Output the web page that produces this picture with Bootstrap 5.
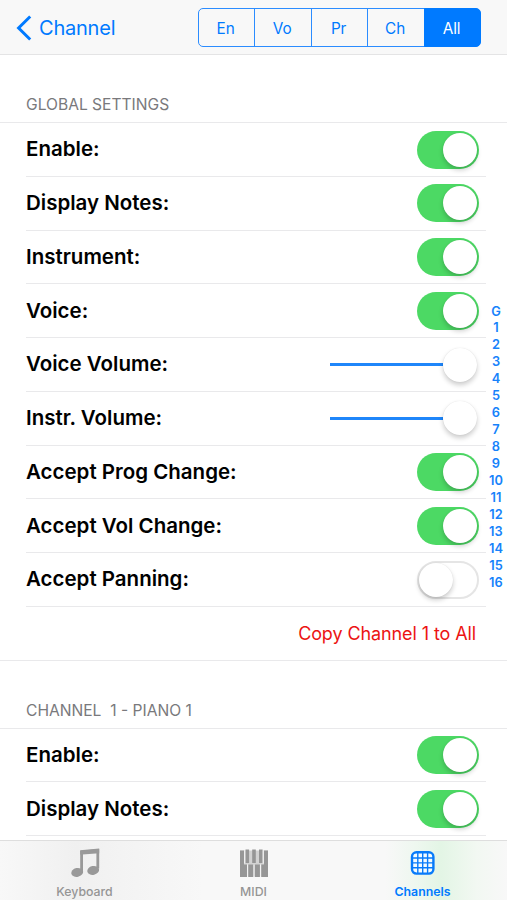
<!DOCTYPE html>
<html lang="en">
<head>
<meta charset="utf-8">
<meta name="viewport" content="width=device-width, initial-scale=1">
<title>Channels</title>
<link href="https://cdn.jsdelivr.net/npm/bootstrap@5.3.0/dist/css/bootstrap.min.css" rel="stylesheet">
<style>
:root{--blue:#007aff;--line:#e9e9eb}
body{font-family:Inter,"Liberation Sans",sans-serif;color:#000;line-height:1.2}
.screen{height:900px}
.topbar{height:55px;background:#f8f8f8;border-bottom:1px solid #e4e4e5;padding:1px 25.6px 0 16px}
.back{color:var(--blue);font-size:20px;letter-spacing:-.22px;gap:6px;text-decoration:none}
.segments{width:283.6px;height:39px}
.segments .btn{--bs-btn-color:var(--blue);--bs-btn-border-color:#2b8cff;--bs-btn-active-color:#fff;--bs-btn-active-bg:var(--blue);--bs-btn-active-border-color:var(--blue);--bs-btn-font-size:15.3px;--bs-btn-border-radius:5px;flex:1 1 0;padding:1px 2px 0 0;line-height:37px;letter-spacing:-.1px;--bs-btn-border-width:1.3px}
.settings{height:785px;background:#fff}
.section-title{color:#79797c;font-size:15.6px;padding:0 26px 7px;border-bottom:1px solid var(--line);white-space:pre}
.first-title{height:68px}
.next-title{height:69px;border-top:1px solid var(--line)}
.setting{height:53.75px;margin-left:26px;margin-right:21px;padding:.5px 7px 0 0;border-bottom:1px solid var(--line);font-size:20.5px;font-weight:600}
.final{border-bottom:0;height:52.75px;padding-right:10px}
.copy{color:#ec1313;font-weight:400;font-size:18px;letter-spacing:-.1px}
.toggle{width:62.5px;height:38px;border-radius:19px;background:#4cd964;padding:2px}
.knob{width:34px;height:34px;border-radius:50%;background:#fff;box-shadow:0 3px 5px rgba(0,0,0,.2),0 0 1px rgba(0,0,0,.12)}
.toggle.off{background:#fff;border:2px solid #e5e5e5;padding:0}
.slide{width:149px;padding-right:2px}
.track{height:3px;background:#1f86fa}
.rail{right:0;top:303.5px;width:22px;color:#1682fb;font-size:12.8px;font-weight:600;line-height:16.96px;letter-spacing:.1px}
.tabs{height:60px;background:linear-gradient(90deg,#f8f8f8 0,#f0f0f0 15%,#f4f4f4 27%,#f8f8f8 40%,#f8f8f8 76%,#eef7ef 82%,#e3f5e5 87%,#f2f8f2 94%,#f8f8f8 100%);border-top:1px solid #dedede;color:#959595;font-size:12.3px;font-weight:500}
.tab{padding-top:6px}
.tab.current{color:var(--blue);font-weight:600}
.tab svg{margin-bottom:6px}
</style>
<script src="https://cdn.jsdelivr.net/npm/bootstrap@5.3.0/dist/js/bootstrap.bundle.min.js"></script>
</head>
<body>
<div class="screen position-relative overflow-hidden d-flex flex-column">
<header class="topbar d-flex align-items-center justify-content-between flex-shrink-0">
<a class="back d-flex align-items-center"><svg width="17" height="28" viewBox="0 0 17 28"><path d="M14.2 2.5 2.6 14l11.6 11.5" fill="none" stroke="#007aff" stroke-width="3"/></svg><span class="label-back">Channel</span></a>
<div class="btn-group segments">
<button class="btn">En</button><button class="btn">Vo</button><button class="btn">Pr</button><button class="btn">Ch</button><button class="btn active">All</button>
</div>
</header>
<main class="settings overflow-hidden flex-shrink-0">
<div class="section-title first-title d-flex align-items-end">GLOBAL SETTINGS</div>
<div class="setting d-flex align-items-center justify-content-between"><span>Enable:</span><div class="toggle d-flex justify-content-end"><div class="knob"></div></div></div>
<div class="setting d-flex align-items-center justify-content-between"><span>Display Notes:</span><div class="toggle d-flex justify-content-end"><div class="knob"></div></div></div>
<div class="setting d-flex align-items-center justify-content-between"><span>Instrument:</span><div class="toggle d-flex justify-content-end"><div class="knob"></div></div></div>
<div class="setting d-flex align-items-center justify-content-between"><span>Voice:</span><div class="toggle d-flex justify-content-end"><div class="knob"></div></div></div>
<div class="setting d-flex align-items-center justify-content-between"><span>Voice Volume:</span><div class="slide d-flex align-items-center"><div class="track flex-grow-1"></div><div class="knob"></div></div></div>
<div class="setting d-flex align-items-center justify-content-between"><span>Instr. Volume:</span><div class="slide d-flex align-items-center"><div class="track flex-grow-1"></div><div class="knob"></div></div></div>
<div class="setting d-flex align-items-center justify-content-between"><span>Accept Prog Change:</span><div class="toggle d-flex justify-content-end"><div class="knob"></div></div></div>
<div class="setting d-flex align-items-center justify-content-between"><span>Accept Vol Change:</span><div class="toggle d-flex justify-content-end"><div class="knob"></div></div></div>
<div class="setting d-flex align-items-center justify-content-between"><span>Accept Panning:</span><div class="toggle off d-flex"><div class="knob"></div></div></div>
<div class="setting final d-flex align-items-center justify-content-end"><span class="copy">Copy Channel 1 to All</span></div>
<div class="section-title next-title d-flex align-items-end">CHANNEL  1 - PIANO 1</div>
<div class="setting d-flex align-items-center justify-content-between"><span>Enable:</span><div class="toggle d-flex justify-content-end"><div class="knob"></div></div></div>
<div class="setting d-flex align-items-center justify-content-between"><span>Display Notes:</span><div class="toggle d-flex justify-content-end"><div class="knob"></div></div></div>
</main>
<nav class="rail position-absolute text-center"><div>G</div><div>1</div><div>2</div><div>3</div><div>4</div><div>5</div><div>6</div><div>7</div><div>8</div><div>9</div><div>10</div><div>11</div><div>12</div><div>13</div><div>14</div><div>15</div><div>16</div></nav>
<footer class="tabs row g-0 flex-shrink-0 text-center">
<div class="tab col d-flex flex-column align-items-center"><svg width="32" height="32" viewBox="0 0 32 32"><path d="M12.6 24V4.6L28.8 3V21.5" fill="none" stroke="#999" stroke-width="2.8"/><path d="M11.2 3.8 30.2 2v4.2L13.4 7.6h-2.2z" fill="#999"/><ellipse cx="8.2" cy="25.4" rx="6" ry="4.4" fill="#999" transform="rotate(-12 8.2 25.4)"/><ellipse cx="24.2" cy="23.4" rx="6" ry="4.4" fill="#999" transform="rotate(-12 24.2 23.4)"/></svg><span>Keyboard</span></div>
<div class="tab col d-flex flex-column align-items-center"><svg width="32" height="32" viewBox="0 0 32 32"><path d="M2 3.5h28v26H2z" fill="#d2d2d2"/><path d="M2 3.5h4v14h3v12.5H2zM10.2 17.5h5.2V30h-5.2zM16.7 17.5h5.2V30h-5.2zM23.2 17.5H26v-14h4V30h-6.8z" fill="#969696"/><path d="M7.5 2.5h3.6v13.5H7.5zM14.2 2.5h3.6v13.5h-3.6zM21 2.5h3.6v13.5H21z" fill="#969696"/><path d="M6.7 3.5v13M25.2 3.5v13M9.6 17.5v13M16 17.5v13M22.6 17.5v13" stroke="#f8f8f8" stroke-width=".9"/></svg><span>MIDI</span></div>
<div class="tab current col d-flex flex-column align-items-center"><svg width="32" height="32" viewBox="0 0 32 32"><rect x="5" y="5.2" width="21.4" height="21.4" rx="4.5" fill="#f4fcff" stroke="#087bfa" stroke-width="2.4"/><path d="M10.8 5v22M15.7 5v22M20.6 5v22M5 11h22M5 15.9h22M5 20.8h22" fill="none" stroke="#087bfa" stroke-width="1.4"/></svg><span>Channels</span></div>
</footer>
</div>
</body>
</html>
